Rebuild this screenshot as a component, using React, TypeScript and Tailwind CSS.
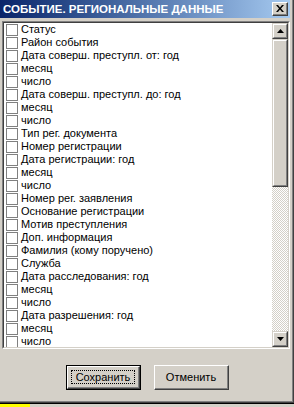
import React from "react";

const items = [
  "Статус",
  "Район события",
  "Дата соверш. преступл. от: год",
  "месяц",
  "число",
  "Дата соверш. преступл. до: год",
  "месяц",
  "число",
  "Тип рег. документа",
  "Номер регистрации",
  "Дата регистрации: год",
  "месяц",
  "число",
  "Номер рег. заявления",
  "Основание регистрации",
  "Мотив преступления",
  "Доп. информация",
  "Фамилия (кому поручено)",
  "Служба",
  "Дата расследования: год",
  "месяц",
  "число",
  "Дата разрешения: год",
  "месяц",
  "число",
];

function ScrollButton({ up }: { up: boolean }) {
  return (
    <div className="w-[16px] h-[16px] border-t border-l border-t-[#d4d0c8] border-l-[#d4d0c8] border-r border-b border-r-[#404040] border-b-[#404040]">
      <div className="w-full h-full border-t border-l border-t-white border-l-white border-r border-b border-r-[#808080] border-b-[#808080] bg-[#d4d0c8] flex items-center justify-center">
        <svg width="7" height="4" viewBox="0 0 7 4">
          {up ? (
            <polygon points="3.5,0 7,4 0,4" fill="#000" />
          ) : (
            <polygon points="0,0 7,0 3.5,4" fill="#000" />
          )}
        </svg>
      </div>
    </div>
  );
}

export default function App() {
  return (
    <div className="w-[294px] h-[407px] flex flex-col bg-[#d4d0c8] font-['Liberation_Sans',Arial,sans-serif] overflow-hidden">
      <div className="flex-1 flex flex-col border-r border-b border-r-[#404040] border-b-[#404040]">
        <div className="flex-1 flex flex-col border-r border-b border-r-[#808080] border-b-[#808080] pr-[2px]">
          {/* Title bar */}
          <div className="h-[18px] flex items-center justify-between bg-gradient-to-r from-[#0a246a] to-[#a6caf0] pl-[3px] pr-[2px]">
            <span className="text-white font-bold text-[11.5px] leading-[18px] whitespace-nowrap">
              СОБЫТИЕ. РЕГИОНАЛЬНЫЕ ДАННЫЕ
            </span>
            <div className="w-[16px] h-[14px] border-t border-l border-t-white border-l-white border-r border-b border-r-[#404040] border-b-[#404040]">
              <div className="w-full h-full border-r border-b border-r-[#808080] border-b-[#808080] bg-[#d4d0c8] flex items-center justify-center">
                <svg width="8" height="7" viewBox="0 0 8 7">
                  <path d="M0 0h2l2 2.5L6 0h2L5 3.5 8 7H6L4 4.5 2 7H0l3-3.5z" fill="#000" />
                </svg>
              </div>
            </div>
          </div>
          {/* List box */}
          <div className="mt-[3px] ml-[2px] h-[328px] border-t border-l border-t-[#808080] border-l-[#808080] border-r border-b border-r-white border-b-white">
            <div className="w-full h-full flex border-t border-l border-t-[#404040] border-l-[#404040] border-r border-b border-r-[#d4d0c8] border-b-[#d4d0c8] bg-white">
              <div className="flex-1 overflow-hidden">
                {items.map((t, i) => (
                  <div key={i} className="h-[13px] flex items-center">
                    <div className="ml-[2px] w-[12px] h-[12px] border border-[#808080] bg-white" />
                    <span className="ml-[3px] text-[11px] leading-[13px] text-black whitespace-nowrap">
                      {t}
                    </span>
                  </div>
                ))}
              </div>
              <div className="w-[16px] flex flex-col">
                <ScrollButton up />
                <div className="h-[148px] border-t border-l border-t-[#d4d0c8] border-l-[#d4d0c8] border-r border-b border-r-[#404040] border-b-[#404040]">
                  <div className="w-full h-full border-t border-l border-t-white border-l-white border-r border-b border-r-[#808080] border-b-[#808080] bg-[#d4d0c8]" />
                </div>
                <div className="flex-1 bg-[repeating-conic-gradient(#d4d0c8_0_25%,#ffffff_0_50%)] bg-[length:2px_2px]" />
                <ScrollButton up={false} />
              </div>
            </div>
          </div>
          {/* Buttons */}
          <div className="mt-[16px] flex justify-center pl-[5px] gap-[13px]">
            <div className="w-[75px] h-[25px] border border-black">
              <div className="w-full h-full border-t border-l border-t-white border-l-white border-r border-b border-r-[#404040] border-b-[#404040]">
                <div className="w-full h-full border-r border-b border-r-[#808080] border-b-[#808080] bg-[#d4d0c8] p-[3px]">
                  <div className="w-full h-full border border-dotted border-black flex items-center justify-center text-[11px] text-black">
                    Сохранить
                  </div>
                </div>
              </div>
            </div>
            <div className="w-[75px] h-[25px] border-t border-l border-t-white border-l-white border-r border-b border-r-[#404040] border-b-[#404040]">
              <div className="w-full h-full border-r border-b border-r-[#808080] border-b-[#808080] bg-[#d4d0c8] flex items-center justify-center text-[11px] text-black">
                Отменить
              </div>
            </div>
          </div>
        </div>
      </div>
      <div className="h-[1px] bg-black" />
      <div className="h-[3px] flex">
        <div className="w-[30px] bg-[#ffff00]" />
        <div className="flex-1 bg-[#d4d0c8]" />
      </div>
    </div>
  );
}
